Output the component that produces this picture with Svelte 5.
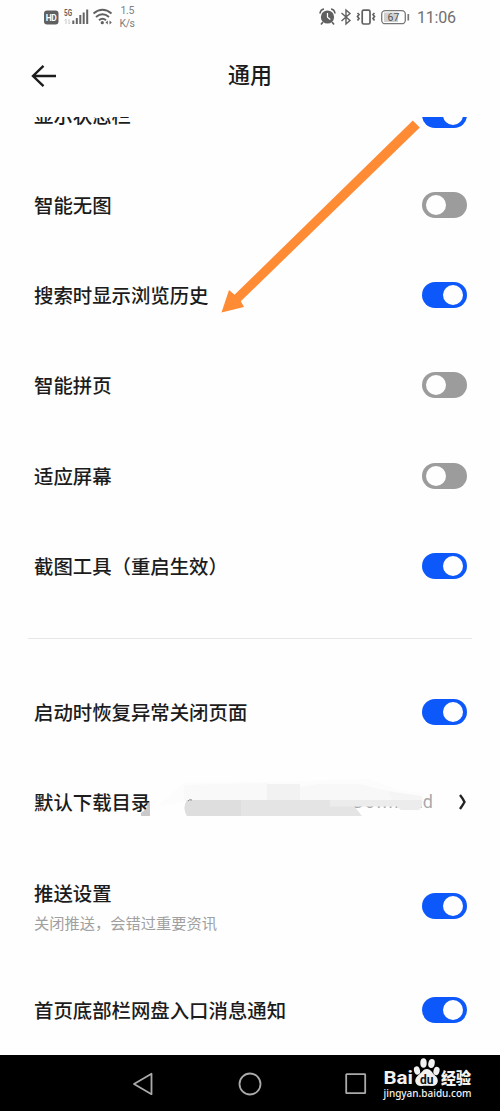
<script lang="ts">
  type Row = {
    label: string;
    note?: string;
    on?: boolean;
    link?: boolean;
    tall?: boolean;
  };

  const display: Row[] = [
    { label: "显示状态栏", on: true },
    { label: "智能无图", on: false },
    { label: "搜索时显示浏览历史", on: true },
    { label: "智能拼页", on: false },
    { label: "适应屏幕", on: false },
    { label: "截图工具（重启生效）", on: true },
  ];
  const other: Row[] = [
    { label: "启动时恢复异常关闭页面", on: true },
    { label: "默认下载目录", link: true },
    { label: "推送设置", note: "关闭推送，会错过重要资讯", on: true, tall: true },
    { label: "首页底部栏网盘入口消息通知", on: true },
  ];

  let groups = $state([display, other]);

  function toggle(row: Row) {
    row.on = !row.on;
  }
</script>

<div class="screen">
  <div class="status">
    <div class="signals">
      <svg width="100" height="26" viewBox="40 5 100 26">
        <rect x="44" y="10.500" width="14.500" height="14" rx="3" fill="#606060" />
        <text x="51.300" y="20.800" font-size="8.500" font-weight="700" text-anchor="middle" fill="#fff" textLength="11">HD</text>
        <text x="64" y="16" font-size="8.500" font-weight="700" fill="#606060" textLength="8" lengthAdjust="spacingAndGlyphs">5G</text>
        <path d="M66 19v5M64.500 20.500l1.500-1.500M69 19v5M69 24l1.500-1.500" stroke="#ccc" fill="none" />
        <path d="M73.300 20.500v3.500M76.800 18v6M80.300 15v9M83.700 12.500v11.500M87.200 9.500v14.500" stroke="#646464" stroke-width="2" />
        <g fill="none" stroke="#606060" stroke-width="1.900">
          <path d="M93.500 13.500q9-7.500 18 0" />
          <path d="M96 17q6.500-5.500 13 0" />
          <path d="M99 20.200q3.500-3 7 0" />
        </g>
        <circle cx="102.300" cy="22.700" r="1.600" fill="#606060" />
        <path d="M105.500 22.500l2.300-2v4zM111.800 22.500l-2.300-2v4z" fill="#606060" />
        <g font-size="10.500" fill="#808080">
          <text x="120.500" y="14" textLength="14">1.5</text>
          <text x="119.500" y="26.500" textLength="15.500">K/s</text>
        </g>
      </svg>
    </div>
    <div class="system">
      <svg width="94" height="20" viewBox="318 7 94 20">
        <circle cx="327.500" cy="17" r="6.600" fill="#606060" />
        <path d="M320 13.500q.5-4 4-4.500M335 13.500q-.5-4-4-4.500M323 22l-2 2.500M332 22l2 2.500" stroke="#606060" stroke-width="1.700" fill="none" />
        <path d="M327.500 13v4.300l2.800 2.200" stroke="#fff" stroke-width="1.200" fill="none" />
        <path d="M341.500 13l8.500 7.500-4 3.500v-14l4 3.500-8.500 7.500" stroke="#606060" stroke-width="1.400" fill="none" />
        <rect x="362.200" y="10.200" width="7.800" height="13.800" rx="1.500" stroke="#606060" stroke-width="1.700" fill="none" />
        <path d="M357.500 13l1.500 1.500-1.500 2 1.500 2-1.500 2M374.500 13l-1.500 1.500 1.500 2-1.500 2 1.500 2" stroke="#606060" stroke-width="1.700" fill="none" />
        <rect x="381.700" y="10.700" width="23.600" height="13" rx="3.500" stroke="#777" stroke-width="1.300" fill="#fff" />
        <path d="M384 12.500h14v9.500h-14z" fill="#d0d0d0" />
        <path d="M408.300 14v6.500" stroke="#777" stroke-width="1.700" />
        <text x="393.500" y="21" font-size="10.500" text-anchor="middle" fill="#555">67</text>
      </svg>
      <span class="clock">11:06</span>
    </div>
  </div>

  <header>
    <svg class="back" width="28" height="24" viewBox="0 0 28 24">
      <path d="M25 12H2M12.500 1.800L2 12l10.500 10.200" />
    </svg>
    <h1>通用</h1>
  </header>

  <main>
    {#each groups as rows, i}
      {#if i > 0}
        <hr />
      {/if}
      {#each rows as row}
        <div class="row" class:tall={row.tall}>
          <div class="label">
            <div>{row.label}</div>
            {#if row.note}
              <div class="note">{row.note}</div>
            {/if}
          </div>
          {#if row.link}
            <div class="path">
              r/Download
              <svg class="smudge" width="350" height="84" viewBox="130 770 350 84">
                <path d="M158 806l26-24h84l100-3 34 12 22 2v8h-236z" fill="#fcfcfc" />
                <path d="M184 785l84-2v18h-84z" fill="#f9f9f9" />
                <path d="M267 784h33v17h-33z" fill="#f2f2f2" />
                <path d="M300 801v-14l18-3h42l28 7 10 10z" fill="#f8f8f8" />
                <path d="M388 791l33 5 2 5-3 5h-25z" fill="#f5f5f5" />
                <path d="M187 800h143v6h24l8 10H187q-5-8 0-16z" fill="#e4e4e4" />
                <path d="M187 800h54v16h-54q-5-8 0-16z" fill="#dedede" />
                <path d="M330 800h92v6l-3 4h-18l-4-3.500h-67z" fill="#ececec" />
                <path d="M141 816v-3l5-4 2-6 2-1v14z" fill="#c9c9c9" />
                <path d="M188 801q1-2 4-1" stroke="#888" fill="none" />
              </svg>
            </div>
            <svg class="chevron" width="10" height="18" viewBox="0 0 10 18">
              <path d="M3 2Q5.500 5 7.500 9Q5.500 12.500 3 16" />
            </svg>
          {:else}
            <button
              class="switch"
              class:on={row.on}
              aria-label={row.label}
              onclick={() => toggle(row)}
            ></button>
          {/if}
        </div>
      {/each}
    {/each}
  </main>

  <nav>
    <svg width="22" height="24" viewBox="0 0 22 24">
      <path d="M2 12L19.500 1.800v20.400z" stroke-linejoin="round" />
    </svg>
    <svg width="24" height="24" viewBox="0 0 24 24">
      <circle cx="12" cy="12" r="10.500" />
    </svg>
    <svg width="22" height="22" viewBox="0 0 22 22">
      <rect x="1.200" y="1.200" width="19" height="19" rx=".5" />
    </svg>
  </nav>

  <svg class="pointer" width="210" height="200" viewBox="215 117 210 200">
    <path d="M412.800 120.500L419.800 127.500L240.800 301.300L244 307L221.500 312.500L229 290L234.500 294.800z" />
  </svg>

  <div class="watermark">
    <svg width="92" height="50" viewBox="382 1055 92 50">
      <g fill="#f2f2f2">
        <text x="383.500" y="1084.300" font-size="17.500" font-weight="700" textLength="29.500" lengthAdjust="spacingAndGlyphs">Bai</text>
        <ellipse cx="417" cy="1070.500" rx="3" ry="4.200" transform="rotate(-15 417 1070.500)" />
        <ellipse cx="423.500" cy="1063" rx="3.200" ry="4.700" />
        <ellipse cx="431.500" cy="1063.500" rx="3.200" ry="4.500" transform="rotate(12 431.500 1063.500)" />
        <ellipse cx="436.500" cy="1071" rx="3" ry="4.200" transform="rotate(15 436.500 1071)" />
        <path d="M427 1069c4 0 5 4 8 6.500 5 4 3 10.500-3 10.500-3 0-7-.5-10 0-6 1-9.500-6-4-10.500 4-3 5-6.500 9-6.500z" />
        <text x="441" y="1084.300" font-size="15.500" font-weight="900" textLength="30" lengthAdjust="spacingAndGlyphs">经验</text>
        <text class="url" x="383.500" y="1096.500" font-size="11.500" textLength="88" lengthAdjust="spacingAndGlyphs">jingyan.baidu.com</text>
      </g>
      <text x="420" y="1083.500" font-size="12" font-weight="700" fill="#111" textLength="13.500" lengthAdjust="spacingAndGlyphs">du</text>
    </svg>
  </div>
</div>

<style>
  :global(body) {
    margin: 0;
    background: #fefefe;
  }
  .screen {
    position: relative;
    display: flex;
    flex-direction: column;
    width: 500px;
    height: 1111px;
    overflow: hidden;
    color: #1c1c1c;
    background: #fefefe;
    font-family: Roboto, "Noto Sans CJK SC", sans-serif;
  }
  svg {
    display: block;
    flex: none;
  }

  .status {
    display: flex;
    justify-content: space-between;
    height: 34px;
    padding: 0 45px 0 40px;
  }
  .signals {
    padding-top: 5px;
  }
  .system {
    display: flex;
    gap: 5px;
    padding-top: 7px;
  }
  .clock {
    width: 38px;
    font-size: 16px;
    line-height: 21px;
    letter-spacing: -0.2px;
    color: #707070;
    white-space: nowrap;
  }

  header {
    display: grid;
    grid-template-columns: 60px 1fr 60px;
    align-items: center;
    height: 83px;
    flex: none;
  }
  .back {
    margin-left: 31px;
    fill: none;
    stroke: #1c1c1c;
    stroke-width: 2.4;
  }
  h1 {
    margin: 0;
    padding-top: 1px;
    font-size: 22px;
    font-weight: 500;
    line-height: 30px;
    text-align: center;
  }

  main {
    flex: 1;
    overflow: hidden;
  }
  .row {
    display: flex;
    align-items: center;
    justify-content: space-between;
    box-sizing: border-box;
    height: 90.2px;
    padding: 0 33px 0 34px;
  }
  .row:first-child {
    margin-top: -47.3px;
  }
  .row.tall {
    height: 118px;
  }
  .label {
    padding-top: 4px;
    font-size: 19.4px;
    font-weight: 500;
    line-height: 30px;
    white-space: nowrap;
  }
  .tall .label {
    padding-top: 6px;
  }
  .note {
    font-size: 15.25px;
    font-weight: 400;
    line-height: 29px;
    color: #a0a0a0;
  }
  hr {
    height: 1px;
    margin: 27px 28px 28px;
    border: 0;
    background: #e6e6e6;
  }

  .switch {
    display: flex;
    align-items: center;
    width: 45px;
    height: 26px;
    padding: 0 4px;
    border: 0;
    border-radius: 13px;
    background: #9c9c9c;
  }
  .switch::before {
    content: "";
    width: 20px;
    height: 20px;
    border-radius: 50%;
    background: #fefefe;
  }
  .switch.on {
    justify-content: flex-end;
    background: #0d58fb;
  }

  .path {
    position: relative;
    margin-left: auto;
    margin-right: 24px;
    font-size: 18px;
    line-height: 22px;
    color: #aaa;
  }
  .smudge {
    position: absolute;
    right: -47px;
    top: -21px;
  }
  .chevron {
    fill: none;
    stroke: #222;
    stroke-width: 2.4;
  }

  nav {
    display: flex;
    align-items: center;
    justify-content: space-between;
    box-sizing: border-box;
    flex: none;
    height: 56px;
    padding: 1px 133px 0 132px;
    background: #000;
  }
  nav svg {
    fill: none;
    stroke: #aaa;
    stroke-width: 1.8;
  }

  .pointer {
    position: absolute;
    left: 215px;
    top: 117px;
    fill: #ff8b35;
  }
  .watermark {
    position: absolute;
    right: 26px;
    bottom: 6px;
  }
  .url {
    font-family: "Noto Sans", sans-serif;
    font-weight: 500;
  }
</style>
